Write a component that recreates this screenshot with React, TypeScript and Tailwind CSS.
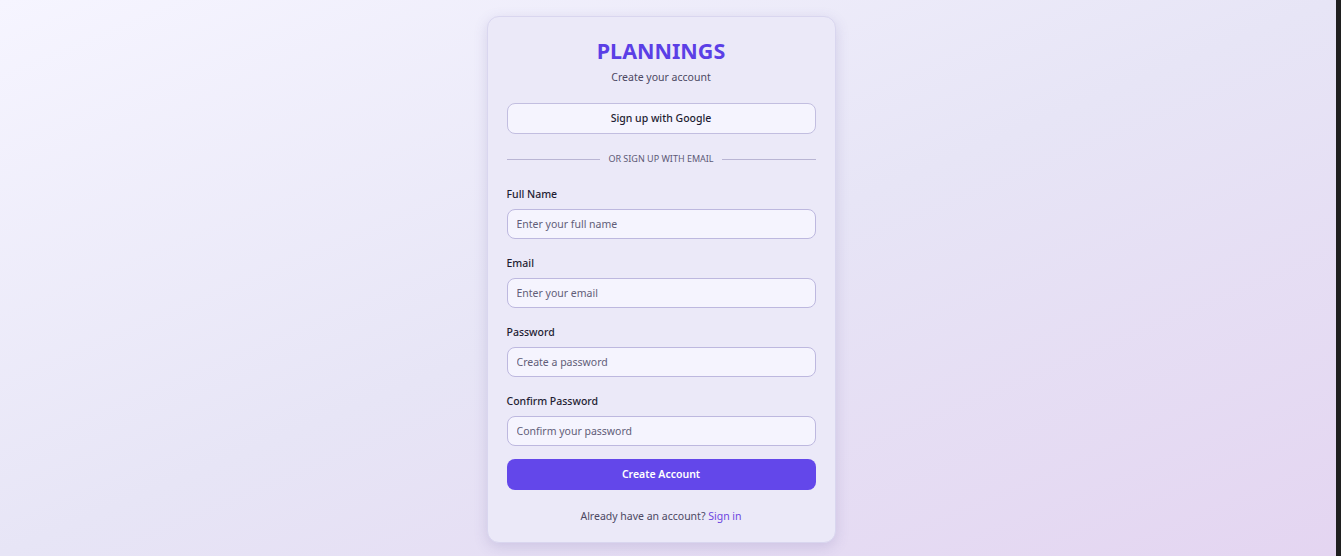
import React from 'react';

const font = { fontFamily: '"Noto Sans", "Open Sans", sans-serif' };

interface FieldProps {
  label: string;
  placeholder: string;
  type?: string;
}

const Field: React.FC<FieldProps> = ({ label, placeholder, type = 'text' }) => (
  <div className="flex flex-col">
    <label className="text-[10.5px] leading-4 font-medium text-[#1f1d33] mb-[7px]">{label}</label>
    <input
      type={type}
      placeholder={placeholder}
      className="h-[30px] w-full rounded-lg border border-[#bdb8df] bg-[#f5f4fe] px-[9px] text-[10.5px] text-[#2a2840] placeholder:text-[#615d78] outline-none"
    />
  </div>
);

const App: React.FC = () => {
  return (
    <div className="flex h-[556px] w-full overflow-hidden" style={font}>
      <main className="flex flex-1 justify-center pr-[14px] pt-[16px] bg-gradient-to-br from-[#f6f5ff] via-[#e7e5f6] to-[#e4d5f1]">
        <div className="w-[349px] h-[527px] rounded-xl border border-[#d9d6ef] bg-[#ebe9f8] px-[19px] pt-[20px] shadow-[0_4px_14px_rgba(90,80,150,0.18)]">
          <div className="flex flex-col items-center">
            <h1 className="text-[21.5px] leading-7 font-bold text-[#5b3fe6]">PLANNINGS</h1>
            <p className="mt-[4px] text-[10.5px] leading-4 text-[#4c4863]">Create your account</p>
          </div>

          <button className="mt-[18px] h-[31px] w-full rounded-lg border border-[#c2bee0] bg-[#f5f4fe] text-[10.5px] font-medium text-[#1f1d33]">
            Sign up with Google
          </button>

          <div className="mt-[19px] flex items-center gap-[8px]">
            <div className="h-px flex-1 bg-[#b9b5d4]" />
            <span className="text-[9px] leading-3 uppercase text-[#5d5976]">Or sign up with email</span>
            <div className="h-px flex-1 bg-[#b9b5d4]" />
          </div>

          <div className="mt-[21px] flex flex-col gap-[16px]">
            <Field label="Full Name" placeholder="Enter your full name" />
            <Field label="Email" placeholder="Enter your email" type="email" />
            <Field label="Password" placeholder="Create a password" type="password" />
            <Field label="Confirm Password" placeholder="Confirm your password" type="password" />
          </div>

          <button className="mt-[13px] h-[31px] w-full rounded-lg bg-[#6347ea] text-[10.5px] font-semibold text-white">
            Create Account
          </button>

          <p className="mt-[18px] text-center text-[10.5px] leading-4 text-[#4c4863]">
            Already have an account? <a className="text-[#6b45e0]">Sign in</a>
          </p>
        </div>
      </main>
      <div className="w-[5px] bg-[#1f1f1f]" />
    </div>
  );
};

export default App;
